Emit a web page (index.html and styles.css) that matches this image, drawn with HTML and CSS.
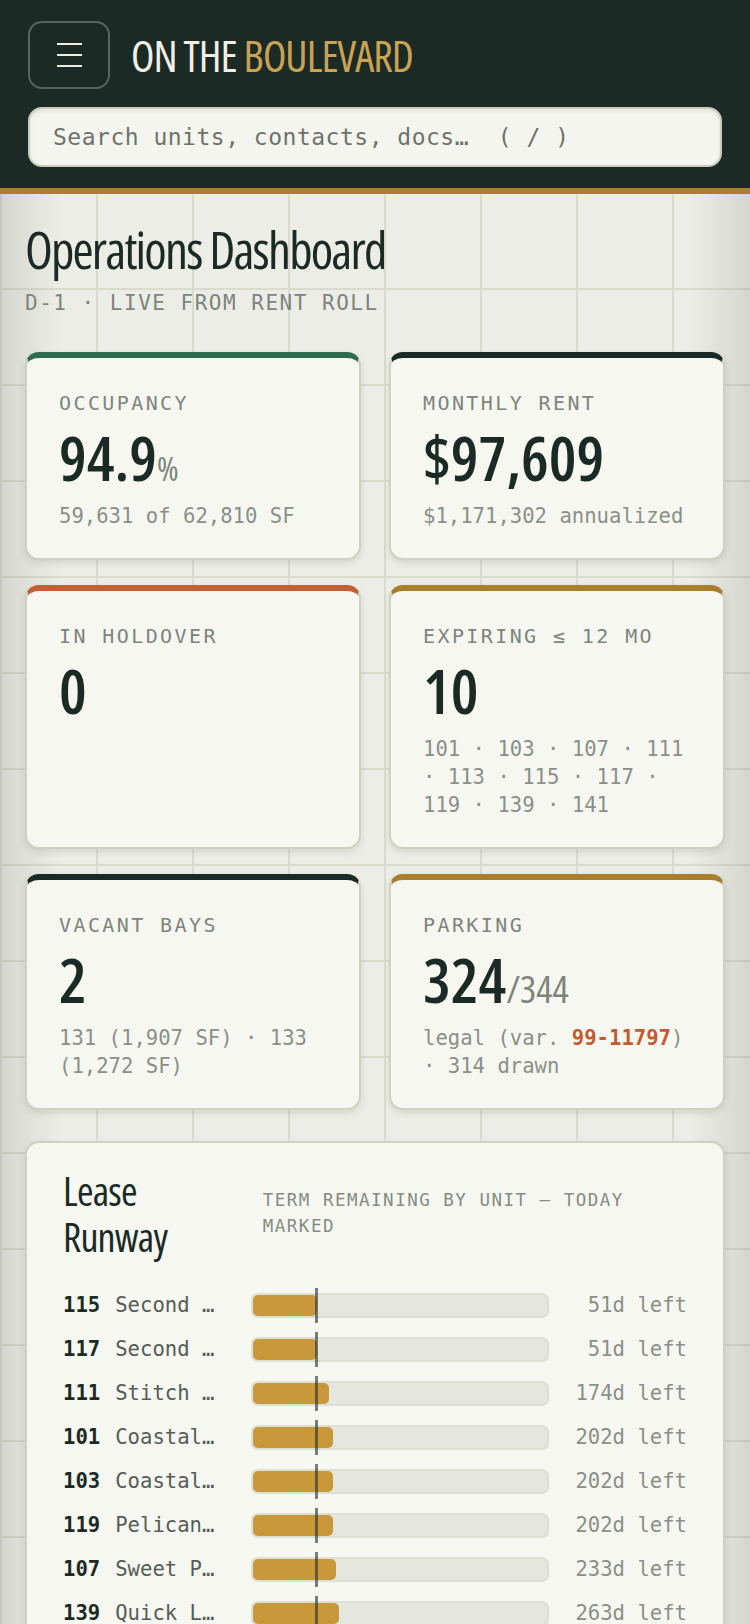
FILE: index.html
```html
<!DOCTYPE html>
<html lang="en">
<head>
  <meta charset="UTF-8" />
  <meta name="viewport" content="width=device-width, initial-scale=1.0"/>
  <title>On The Boulevard — Operations Dashboard</title>
  <link rel="stylesheet" href="styles.css">
</head>
<body>

  <header class="topbar">
    <div class="brand-row">
      <button class="menu-btn" aria-label="Menu">
        <span></span><span></span><span></span>
      </button>
      <div class="brand">ON THE <span class="brand-accent">BOULEVARD</span></div>
    </div>
    <input class="search" type="text" placeholder="Search units, contacts, docs…&#160; ( / )" />
  </header>

  <main class="page">
    <h1 class="page-title">Operations Dashboard</h1>
    <p class="page-sub">D-1 · LIVE FROM RENT ROLL</p>

    <section class="stats">
      <div class="stat stat-green">
        <div class="stat-label">OCCUPANCY</div>
        <div class="stat-value">94.9<span class="stat-unit">%</span></div>
        <div class="stat-note">59,631 of 62,810 SF</div>
      </div>
      <div class="stat stat-dark">
        <div class="stat-label">MONTHLY RENT</div>
        <div class="stat-value">$97,609</div>
        <div class="stat-note">$1,171,302 annualized</div>
      </div>
      <div class="stat stat-rust">
        <div class="stat-label">IN HOLDOVER</div>
        <div class="stat-value">0</div>
      </div>
      <div class="stat stat-gold">
        <div class="stat-label">EXPIRING ≤ 12 MO</div>
        <div class="stat-value">10</div>
        <div class="stat-note">101 · 103 · 107 · 111 · 113 · 115 · 117 · 119 · 139 · 141</div>
      </div>
      <div class="stat stat-dark">
        <div class="stat-label">VACANT BAYS</div>
        <div class="stat-value">2</div>
        <div class="stat-note">131 (1,907 SF) · 133 (1,272 SF)</div>
      </div>
      <div class="stat stat-gold">
        <div class="stat-label">PARKING</div>
        <div class="stat-value">324<span class="stat-of">/344</span></div>
        <div class="stat-note">legal (var. <b class="hot">99-11797</b>) · 314 drawn</div>
      </div>
    </section>

    <section class="panel">
      <div class="panel-head">
        <h2 class="panel-title">Lease Runway</h2>
        <div class="panel-sub">TERM REMAINING BY UNIT — TODAY MARKED</div>
      </div>

      <div class="runway">
        <div class="run-row">
          <div class="run-unit"><b>115</b><span class="run-name">Second Wind Surf</span></div>
          <div class="track"><div class="fill" style="width: 21.6%"></div><i class="today"></i></div>
          <div class="run-days">51d left</div>
        </div>
        <div class="run-row">
          <div class="run-unit"><b>117</b><span class="run-name">Second Wind Surf</span></div>
          <div class="track"><div class="fill" style="width: 21.6%"></div><i class="today"></i></div>
          <div class="run-days">51d left</div>
        </div>
        <div class="run-row">
          <div class="run-unit"><b>111</b><span class="run-name">Stitch &amp; Thread</span></div>
          <div class="track"><div class="fill" style="width: 26%"></div><i class="today"></i></div>
          <div class="run-days">174d left</div>
        </div>
        <div class="run-row">
          <div class="run-unit"><b>101</b><span class="run-name">Coastal Coffee</span></div>
          <div class="track"><div class="fill" style="width: 27.2%"></div><i class="today"></i></div>
          <div class="run-days">202d left</div>
        </div>
        <div class="run-row">
          <div class="run-unit"><b>103</b><span class="run-name">Coastal Coffee</span></div>
          <div class="track"><div class="fill" style="width: 27.2%"></div><i class="today"></i></div>
          <div class="run-days">202d left</div>
        </div>
        <div class="run-row">
          <div class="run-unit"><b>119</b><span class="run-name">Pelican Pete's</span></div>
          <div class="track"><div class="fill" style="width: 27.2%"></div><i class="today"></i></div>
          <div class="run-days">202d left</div>
        </div>
        <div class="run-row">
          <div class="run-unit"><b>107</b><span class="run-name">Sweet Pea Bakery</span></div>
          <div class="track"><div class="fill" style="width: 28.2%"></div><i class="today"></i></div>
          <div class="run-days">233d left</div>
        </div>
        <div class="run-row">
          <div class="run-unit"><b>139</b><span class="run-name">Quick Lube</span></div>
          <div class="track"><div class="fill" style="width: 29.4%"></div><i class="today"></i></div>
          <div class="run-days">263d left</div>
        </div>
        <div class="run-row">
          <div class="run-unit"><b>141</b><span class="run-name">Harbor Nails</span></div>
          <div class="track"><div class="fill" style="width: 30.5%"></div><i class="today"></i></div>
          <div class="run-days">290d left</div>
        </div>
        <div class="run-row">
          <div class="run-unit"><b>113</b><span class="run-name">Tidewater Tax</span></div>
          <div class="track"><div class="fill" style="width: 32%"></div><i class="today"></i></div>
          <div class="run-days">331d left</div>
        </div>
      </div>
    </section>
  </main>

</body>
</html>
```
FILE: styles.css
```css
body {
  margin: 0;
  font-family: "DejaVu Sans Mono", monospace;
  color: #1c2a25;
  background-color: #ecede6;
  background-image:
    linear-gradient(90deg, rgba(70, 80, 60, 0.14), rgba(70, 80, 60, 0) 60px, rgba(70, 80, 60, 0) calc(100% - 60px), rgba(70, 80, 60, 0.14)),
    linear-gradient(90deg, #d9dbcf 2px, transparent 2px),
    linear-gradient(180deg, #d9dbcf 2px, transparent 2px);
  background-size: 100% 100%, 96px 96px, 96px 96px;
  background-position: 0 0, 96px 0, 0 96px;
}

/* header */
.topbar {
  background-color: #1c2a26;
  border-bottom: 6px solid #a97f2e;
  padding: 21px 28px;
  display: flex;
  flex-direction: column;
  gap: 18px;
}
.brand-row {
  display: flex;
  align-items: center;
  gap: 21px;
}
.menu-btn {
  width: 82px;
  height: 68px;
  border: 2px solid #59625d;
  border-radius: 14px;
  background: transparent;
  display: flex;
  flex-direction: column;
  align-items: center;
  justify-content: center;
  gap: 8.5px;
  padding: 0;
  cursor: pointer;
}
.menu-btn span {
  display: block;
  width: 25px;
  height: 2.5px;
  background-color: #f0eee4;
}
.brand {
  font-family: "Open Sans", sans-serif;
  font-stretch: 75%;
  font-weight: 500;
  font-size: 43px;
  line-height: 1;
  letter-spacing: -1px;
  color: #f2f0e6;
}
.brand-accent {
  color: #c9a253;
}
.search {
  display: block;
  box-sizing: border-box;
  width: 100%;
  height: 60px;
  padding: 0 23px;
  border: 2px solid #c9cbbb;
  border-radius: 14px;
  background-color: #f5f5ef;
  box-shadow: inset 0 2px 4px rgba(0, 0, 0, 0.08);
  font-family: "DejaVu Sans Mono", monospace;
  font-size: 23px;
  letter-spacing: 0.5px;
  color: #1c2a25;
  outline: none;
}
.search::placeholder {
  color: #6f726a;
}

/* page */
.page {
  padding: 26px 25px 40px;
}
.page-title {
  margin: 0;
  font-family: "Open Sans", sans-serif;
  font-stretch: 75%;
  font-weight: 500;
  font-size: 51px;
  line-height: 59px;
  letter-spacing: -1.8px;
}
.page-sub {
  margin: 12px 0 0;
  font-size: 21px;
  line-height: 24px;
  letter-spacing: 1.5px;
  color: #7d857c;
}

/* stat cards */
.stats {
  margin-top: 37px;
  display: grid;
  grid-template-columns: 1fr 1fr;
  gap: 25px 28px;
}
.stat {
  background-color: #f6f7f1;
  border: 2px solid #cfd1c3;
  border-top: 6px solid #1c2a25;
  border-radius: 14px;
  padding: 33px 32px 28px;
  box-shadow: 0 3px 7px rgba(40, 50, 35, 0.12);
}
.stat-green { border-top-color: #2e6b4f; }
.stat-dark { border-top-color: #1c2a25; }
.stat-rust { border-top-color: #c45e35; }
.stat-gold { border-top-color: #a97f2e; }
.stat-label {
  font-size: 20px;
  line-height: 24px;
  letter-spacing: 2.4px;
  color: #7d857c;
}
.stat-value {
  margin-top: 11px;
  font-family: "Open Sans", sans-serif;
  font-stretch: 75%;
  font-weight: 600;
  font-size: 62px;
  line-height: 1;
  color: #1c2a25;
}
.stat-unit {
  font-weight: 400;
  font-size: 33px;
  color: #7d857c;
}
.stat-of {
  font-weight: 400;
  font-size: 38px;
  color: #7d857c;
}
.stat-note {
  margin-top: 14px;
  font-size: 20.6px;
  line-height: 28px;
  color: #8a9088;
}
.hot {
  color: #c45a30;
}

/* lease runway */
.panel {
  margin-top: 31px;
  background-color: #f6f7f1;
  border: 2px solid #cfd1c3;
  border-radius: 14px;
  padding: 25px 36px 30px;
  box-shadow: 0 3px 7px rgba(40, 50, 35, 0.12);
}
.panel-head {
  display: flex;
  align-items: baseline;
  gap: 24px;
}
.panel-title {
  margin: 0;
  font-family: "Open Sans", sans-serif;
  font-stretch: 75%;
  font-weight: 500;
  font-size: 40px;
  line-height: 46px;
  letter-spacing: -0.8px;
}
.panel-sub {
  font-size: 17.5px;
  line-height: 26px;
  letter-spacing: 1.5px;
  color: #858c83;
}
.runway {
  margin-top: 28px;
  display: flex;
  flex-direction: column;
  gap: 10px;
}
.run-row {
  display: grid;
  grid-template-columns: 156px 1fr 118px;
  column-gap: 20px;
  align-items: center;
  height: 34px;
  font-size: 20.6px;
  line-height: 24px;
}
.run-unit {
  display: flex;
  gap: 15px;
  min-width: 0;
  white-space: nowrap;
}
.run-unit b {
  color: #1c2a25;
}
.run-name {
  overflow: hidden;
  text-overflow: ellipsis;
  color: #555d55;
}
.track {
  position: relative;
  height: 25px;
  margin-left: 12px;
  box-sizing: border-box;
  border: 2px solid #dcdfd3;
  border-radius: 7px;
  background-color: #e5e7de;
}
.fill {
  height: 100%;
  border-radius: 5px;
  background-color: #c8983a;
}
.today {
  position: absolute;
  left: 21.2%;
  top: -7px;
  bottom: -7px;
  width: 3px;
  background-color: rgba(40, 50, 44, 0.62);
}
.run-days {
  text-align: right;
  color: #8a9088;
}
```
